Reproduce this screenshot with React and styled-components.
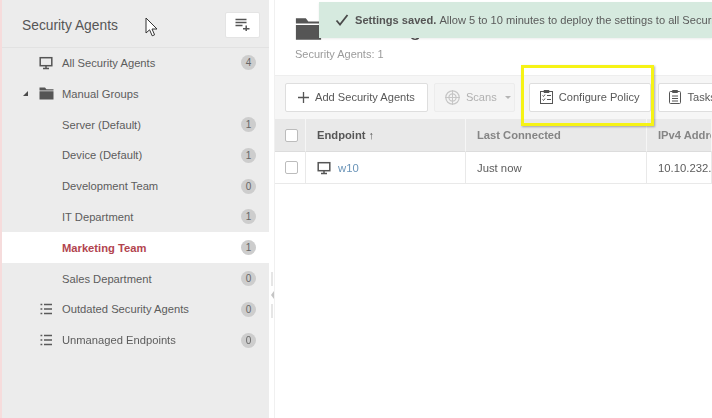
import React from 'react';
import styled, { createGlobalStyle } from 'styled-components';

const GlobalStyle = createGlobalStyle`
  html, body {
    margin: 0;
    padding: 0;
    height: 100%;
    background: #ffffff;
    overflow: hidden;
    font-family: "Liberation Sans", Arial, sans-serif;
  }
`;

const Page = styled.div`
  position: relative;
  display: flex;
  width: 712px;
  height: 418px;
  overflow: hidden;
  filter: blur(0.4px);
`;

const Sidebar = styled.aside`
  flex: 0 0 267px;
  display: flex;
  flex-direction: column;
  padding-top: 2px;
  background: #ececec;
  border-left: 2px solid #f6dcdc;
`;

const SideHeader = styled.div`
  flex: 0 0 45.6px;
  box-sizing: border-box;
  display: flex;
  align-items: center;
  justify-content: space-between;
  padding: 0 9px 0 20px;
  border-bottom: 1px solid #e2e2e2;
`;

const SideTitle = styled.h2`
  margin: 2px 0 0;
  font-size: 13.8px;
  font-weight: 400;
  color: #565656;
`;

const AddGroupButton = styled.button`
  width: 35px;
  height: 26px;
  margin-top: 1px;
  display: flex;
  align-items: center;
  justify-content: center;
  padding: 0;
  background: #ffffff;
  border: 1px solid #e4e4e4;
  border-radius: 2px;
`;

const Row = styled.div`
  height: 30.8px;
  display: flex;
  align-items: center;
  padding-right: 13px;
  background: ${(p) => (p.$active ? '#ffffff' : 'transparent')};
`;

const Caret = styled.span`
  width: 0;
  height: 0;
  margin: 0 0 0 21px;
  border-left: 5px solid transparent;
  border-bottom: 5px solid #4a4a4a;
`;

const IconSlot = styled.span`
  width: 22px;
  margin-left: ${(p) => p.$offset}px;
  margin-right: 5px;
  display: flex;
  justify-content: center;
`;

const RowLabel = styled.span`
  flex: 1;
  padding-left: ${(p) => (p.$indented ? '60px' : '0')};
  font-size: 11.2px;
  font-weight: ${(p) => (p.$active ? 700 : 400)};
  color: ${(p) => (p.$active ? '#b2444e' : '#5c5c5c')};
`;

const Count = styled.span`
  width: 15px;
  height: 15px;
  border-radius: 50%;
  background: #cdcdcd;
  color: #666666;
  font-size: 10px;
  line-height: 15px;
  text-align: center;
`;

const Splitter = styled.div`
  flex: 0 0 6px;
  box-sizing: border-box;
  display: flex;
  flex-direction: column;
  align-items: flex-start;
  gap: 5px;
  padding: 272px 0 0 2px;
  background: #ffffff;
  border-right: 1px solid #f0f0f0;
`;

const GripLine = styled.span`
  width: 2px;
  height: 14px;
  background: #e6e6e6;
`;

const Grip = styled.span`
  width: 0;
  height: 0;
  border-top: 4px solid transparent;
  border-bottom: 4px solid transparent;
  border-right: 3px solid #c4c4c4;
`;

const Main = styled.main`
  flex: 1;
  min-width: 0;
  display: flex;
  flex-direction: column;
`;

const PageHead = styled.header`
  flex: 0 0 75px;
  box-sizing: border-box;
  padding: 16px 0 0 20px;
`;

const TitleLine = styled.div`
  display: flex;
  align-items: center;
  gap: 7px;
  height: 26px;
`;

const PageTitle = styled.h1`
  margin: 0;
  font-size: 21px;
  font-weight: 400;
  color: #4a4a4a;
  white-space: nowrap;
`;

const SubTitle = styled.div`
  margin-top: 6px;
  font-size: 11px;
  color: #9b9b9b;
`;

const Toolbar = styled.div`
  flex: 0 0 44px;
  box-sizing: border-box;
  display: flex;
  align-items: center;
  gap: 6px;
  padding: 0 0 1px 10px;
  background: #f6f6f6;
  border-top: 1px solid #eeeeee;
`;

const ToolButton = styled.button`
  flex: none;
  height: 29px;
  box-sizing: border-box;
  display: flex;
  align-items: center;
  gap: ${(p) => p.$gap || 7}px;
  margin-left: ${(p) => p.$ml || 0}px;
  padding: 0 ${(p) => p.$padRight || 10}px 0 ${(p) => p.$padLeft || 10}px;
  background: ${(p) => (p.$disabled ? '#f4f4f4' : '#ffffff')};
  border: 1px solid ${(p) => (p.$disabled ? '#ececec' : '#dedede')};
  border-radius: 2px;
  color: ${(p) => (p.$disabled ? '#b0b0b0' : '#585858')};
  font-family: inherit;
  font-size: 11.1px;
`;

const SmallCaret = styled.span`
  width: 0;
  height: 0;
  margin-left: 2px;
  border-left: 3px solid transparent;
  border-right: 3px solid transparent;
  border-top: 3px solid #b4b4b4;
`;

const Table = styled.div`
  display: grid;
  grid-template-columns: 31px 160px 181px 1fr;
`;

const HeadCell = styled.div`
  height: 33px;
  box-sizing: border-box;
  display: flex;
  align-items: center;
  padding-left: ${(p) => (p.$check ? 10 : 11)}px;
  background: #e9e9e9;
  border-right: 1px solid #f6f6f6;
  border-bottom: 1px solid #dcdcdc;
  font-size: 11.2px;
  font-weight: 700;
  white-space: nowrap;
  overflow: hidden;
  color: ${(p) => (p.$sorted ? '#565656' : '#858585')};
`;

const Cell = styled.div`
  height: 32px;
  box-sizing: border-box;
  display: flex;
  align-items: center;
  gap: 7px;
  padding-left: ${(p) => (p.$check ? 10 : 11)}px;
  border-right: 1px solid #e9e9e9;
  border-bottom: 1px solid #e9e9e9;
  font-size: 11.3px;
  color: #5c5c5c;
  white-space: nowrap;
  overflow: hidden;
`;

const CheckBox = styled.span`
  flex: none;
  width: 11px;
  height: 11px;
  background: #ffffff;
  border: 1px solid #bcbcbc;
  border-radius: 2px;
`;

const EndpointLink = styled.a`
  color: #6a94b8;
`;

const Toast = styled.div`
  position: absolute;
  top: 2px;
  left: 319px;
  right: 0;
  height: 36px;
  display: flex;
  align-items: center;
  gap: 6px;
  padding-left: 16px;
  background: #d6eadf;
  box-shadow: 0 1px 2px rgba(0, 0, 0, 0.08);
  font-size: 11.1px;
  color: #5a5a5a;
  white-space: nowrap;
  overflow: hidden;
`;

const ToastIcon = styled.span`
  flex: none;
  display: flex;
`;

const ToastStrong = styled.strong`
  color: #555555;
  margin-right: 3px;
`;

const Highlight = styled.div`
  position: absolute;
  top: 65px;
  left: 521px;
  width: 127px;
  height: 55px;
  border: 3px solid #f6f315;
  box-shadow: 1px 1px 2px rgba(0, 0, 0, 0.3);
`;

const Cursor = styled.svg`
  position: absolute;
  top: 17px;
  left: 145px;
`;

const Monitor = ({ size = 14 }) => (
  <svg width={size} height={size} viewBox="0 0 14 14" fill="none">
    <rect x="1.2" y="1.7" width="11.6" height="8" stroke="#555" strokeWidth="1.5" />
    <path d="M7 10v2M4 12.4h6" stroke="#555" strokeWidth="1.5" />
  </svg>
);

const Folder = ({ w = 15, h = 13 }) => (
  <svg width={w} height={h} viewBox="0 0 15 13">
    <path d="M0.5 0.5h5.5l1.4 1.8h7.1v1.2H0.5z M0.5 4.3h14v8.2h-14z" fill="#555" />
  </svg>
);

const ListIcon = () => (
  <svg width="12" height="12" viewBox="0 0 12 12" stroke="#5a5a5a" strokeWidth="1.3">
    <path d="M0.5 1.5h1.8M4 1.5h8M0.5 6h1.8M4 6h8M0.5 10.5h1.8M4 10.5h8" />
  </svg>
);

const AddGroupIcon = () => (
  <svg width="15" height="13" viewBox="0 0 15 13" stroke="#555" strokeWidth="1.5">
    <path d="M0.5 1.5h11M0.5 4.5h11M0.5 7.5h7M8 10.7h6.5M11.2 7.5v6" />
  </svg>
);

const Plus = () => (
  <svg width="11" height="11" viewBox="0 0 11 11" stroke="#555" strokeWidth="1.3">
    <path d="M0 5.5h11M5.5 0v11" />
  </svg>
);

const ScanIcon = () => (
  <svg width="15" height="15" viewBox="0 0 15 15" fill="none" stroke="#c6c6c6">
    <circle cx="7.5" cy="7.5" r="6.7" strokeWidth="1.2" />
    <circle cx="7.5" cy="7.5" r="3.6" strokeWidth="1.2" />
    <path d="M7.5 0v15M0 7.5h15" strokeWidth="1" />
  </svg>
);

const PolicyIcon = () => (
  <svg width="13" height="14" viewBox="0 0 13 14" fill="none" stroke="#555" strokeWidth="1">
    <rect x="0.5" y="1.5" width="12" height="12" />
    <path d="M4 0.5h5v2H4zM2.5 5.5l1 1 1.5-2M7 5.5h4M2.5 9.5l1 1 1.5-2M7 9.5h4" />
  </svg>
);

const TasksIcon = () => (
  <svg width="12" height="14" viewBox="0 0 12 14" fill="none" stroke="#555" strokeWidth="1">
    <rect x="0.5" y="1.5" width="11" height="12" rx="1" />
    <path d="M3.5 0.5h5v2h-5zM3 6h6M3 8.5h6M3 11h6" />
  </svg>
);

const CheckMark = () => (
  <svg width="14" height="12" viewBox="0 0 14 12" fill="none" stroke="#4a4a4a" strokeWidth="1.8">
    <path d="M1.5 6.5l3.5 4L12.5 1" />
  </svg>
);

const groups = [
  { label: 'All Security Agents', count: 4, icon: <Monitor /> },
  { label: 'Manual Groups', icon: <Folder />, caret: true },
  { label: 'Server (Default)', count: 1 },
  { label: 'Device (Default)', count: 1 },
  { label: 'Development Team', count: 0 },
  { label: 'IT Department', count: 1 },
  { label: 'Marketing Team', count: 1, active: true },
  { label: 'Sales Department', count: 0 },
  { label: 'Outdated Security Agents', count: 0, icon: <ListIcon /> },
  { label: 'Unmanaged Endpoints', count: 0, icon: <ListIcon /> },
];

export default function App() {
  return (
    <Page>
      <GlobalStyle />
      <Sidebar>
        <SideHeader>
          <SideTitle>Security Agents</SideTitle>
          <AddGroupButton aria-label="Add group">
            <AddGroupIcon />
          </AddGroupButton>
        </SideHeader>
        {groups.map((g) => (
          <Row key={g.label} $active={g.active}>
            {g.caret && <Caret />}
            {g.icon && <IconSlot $offset={g.caret ? 7 : 33}>{g.icon}</IconSlot>}
            <RowLabel $indented={!g.icon} $active={g.active}>{g.label}</RowLabel>
            {g.count !== undefined && <Count>{g.count}</Count>}
          </Row>
        ))}
      </Sidebar>
      <Splitter>
        <GripLine />
        <Grip />
        <GripLine />
      </Splitter>
      <Main>
        <PageHead>
          <TitleLine>
            <Folder w={27} h={24} />
            <PageTitle>Marketing Team</PageTitle>
          </TitleLine>
          <SubTitle>Security Agents: 1</SubTitle>
        </PageHead>
        <Toolbar>
          <ToolButton $padLeft={12} $padRight={12} $gap={6}>
            <Plus />
            Add Security Agents
          </ToolButton>
          <ToolButton $disabled $gap={6} $padRight={3}>
            <ScanIcon />
            Scans
            <SmallCaret />
          </ToolButton>
          <ToolButton $ml={8} $gap={6}>
            <PolicyIcon />
            Configure Policy
          </ToolButton>
          <ToolButton $ml={1}>
            <TasksIcon />
            Tasks
          </ToolButton>
        </Toolbar>
        <Table>
          <HeadCell $check><CheckBox /></HeadCell>
          <HeadCell $sorted>Endpoint ↑</HeadCell>
          <HeadCell>Last Connected</HeadCell>
          <HeadCell>IPv4 Address</HeadCell>
          <Cell $check><CheckBox /></Cell>
          <Cell>
            <Monitor />
            <EndpointLink>w10</EndpointLink>
          </Cell>
          <Cell>Just now</Cell>
          <Cell>10.10.232.5</Cell>
        </Table>
      </Main>
      <Toast>
        <ToastIcon><CheckMark /></ToastIcon>
        <span>
          <ToastStrong>Settings saved.</ToastStrong>
          Allow 5 to 10 minutes to deploy the settings to all Security Agents.
        </span>
      </Toast>
      <Highlight />
      <Cursor width="14" height="20" viewBox="0 0 14 20">
        <path d="M1 1v15l3.6-3.2 2.6 6 2.4-1-2.6-5.8H12z" fill="#fff" stroke="#333" strokeWidth="1" />
      </Cursor>
    </Page>
  );
}
